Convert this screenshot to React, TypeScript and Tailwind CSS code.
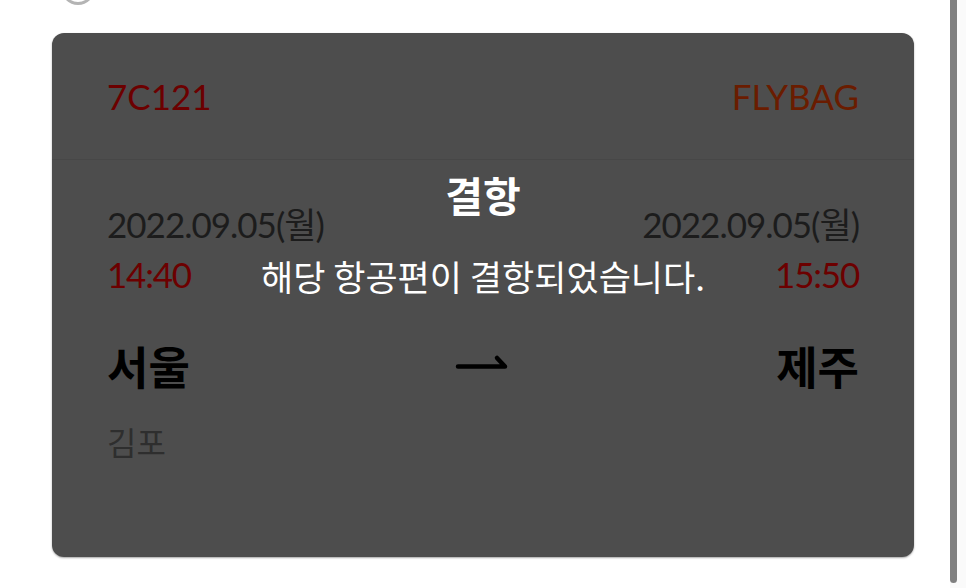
const latin = { fontFamily: 'Lato, "Noto Sans CJK KR", sans-serif' }
const kr = { fontFamily: '"Noto Sans CJK KR", "Noto Sans", sans-serif' }

// ── Route arrow ───────────────────────────────────────────────────────────
function RouteArrow() {
  return (
    <svg className="-mt-[10px]" width="56" height="24" viewBox="0 0 56 24" fill="none" aria-hidden="true">
      <path
        d="M3 17.5H50L42 9"
        stroke="#000"
        strokeWidth="4.5"
        strokeLinecap="round"
        strokeLinejoin="round"
      />
    </svg>
  )
}

function FlightCard() {
  return (
    <div className="relative ml-[52px] mt-[28px] h-[524px] w-[862px] overflow-hidden rounded-[12px] bg-[#4d4d4d] shadow-[0_1px_2px_rgba(0,0,0,0.35)]">
      {/* Header */}
      <div className="flex h-[127px] items-center justify-between border-b border-[#474747] px-[55px]" style={latin}>
        <span className="text-[35px] text-[#6c0000]">7C121</span>
        <span className="text-[35px] text-[#6a1c00]">FLYBAG</span>
      </div>

      {/* Body */}
      <div className="px-[55px] pt-[43px]">
        <div className="flex items-start justify-between">
          <div className="flex flex-col">
            <span className="text-[35px] leading-[42px] tracking-[-1px] text-[#1c1c1c]" style={latin}>
              2022.09.05(월)
            </span>
            <span className="mt-[8px] text-[35px] leading-[42px] tracking-[-1.2px] text-[#6c0000]" style={latin}>
              14:40
            </span>
          </div>
          <div className="flex flex-col items-end">
            <span className="text-[35px] leading-[42px] tracking-[-1px] text-[#1c1c1c]" style={latin}>
              2022.09.05(월)
            </span>
            <span className="mt-[8px] text-[35px] leading-[42px] tracking-[-1.2px] text-[#6c0000]" style={latin}>
              15:50
            </span>
          </div>
        </div>

        <div className="mt-[43px] flex items-center justify-between">
          <span className="text-[45px] font-bold leading-[56px] text-black" style={kr}>서울</span>
          <RouteArrow />
          <span className="text-[45px] font-bold leading-[56px] text-black" style={kr}>제주</span>
        </div>

        <div className="mt-[25px] text-[32px] leading-[44px] text-[#2e2e2e]" style={kr}>김포</div>
      </div>

      {/* Cancelled overlay text */}
      <div className="absolute inset-0 flex flex-col items-center pt-[132px] text-white" style={kr}>
        <span className="text-[41px] font-bold leading-[58px]">결항</span>
        <span className="mt-[30px] text-[35px] leading-[46px]">해당 항공편이 결항되었습니다.</span>
      </div>
    </div>
  )
}

export default function App() {
  return (
    <div className="relative h-[588px] w-full overflow-hidden bg-white">
      {/* partially visible radio circle */}
      <div className="-mt-[29px] ml-[61px] h-[34px] w-[34px] rounded-full border-[3px] border-[#b4b4b4]" />
      <FlightCard />

      {/* scrollbar */}
      <div className="absolute right-0 top-0 h-full w-[16px] bg-[#fafafa]">
        <div className="h-[583px] w-[7px] rounded-b-full bg-[#808080]" />
      </div>
    </div>
  )
}
